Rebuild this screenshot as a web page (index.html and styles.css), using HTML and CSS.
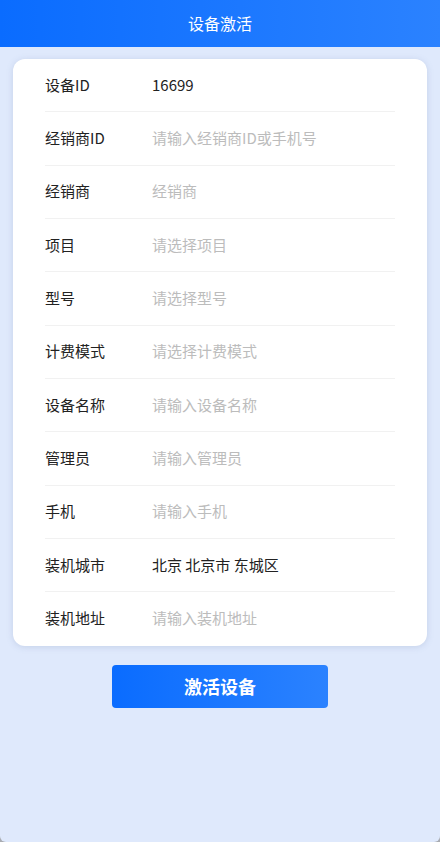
FILE: index.html
```html
<html>
<head>
    <meta http-equiv="Content-Type" content="text/html; charset=UTF-8" />
    <title>设备激活</title>
    <link rel="stylesheet" href="styles.css">
</head>
<body>
<div class="page">

    <div class="header">设备激活</div>

    <div class="card">
        <div class="row"><span class="label">设备ID</span><span class="value">16699</span></div>
        <div class="row"><span class="label">经销商ID</span><span class="value empty">请输入经销商ID或手机号</span></div>
        <div class="row"><span class="label">经销商</span><span class="value empty">经销商</span></div>
        <div class="row"><span class="label">项目</span><span class="value empty">请选择项目</span></div>
        <div class="row"><span class="label">型号</span><span class="value empty">请选择型号</span></div>
        <div class="row"><span class="label">计费模式</span><span class="value empty">请选择计费模式</span></div>
        <div class="row"><span class="label">设备名称</span><span class="value empty">请输入设备名称</span></div>
        <div class="row"><span class="label">管理员</span><span class="value empty">请输入管理员</span></div>
        <div class="row"><span class="label">手机</span><span class="value empty">请输入手机</span></div>
        <div class="row"><span class="label">装机城市</span><span class="value">北京 北京市 东城区</span></div>
        <div class="row"><span class="label">装机地址</span><span class="value empty">请输入装机地址</span></div>
    </div>

    <div class="actions">
        <button class="btn">激活设备</button>
    </div>

</div>
</body>
</html>
```

FILE: styles.css
```css
html, body {
    margin: 0;
    padding: 0;
    background: #a9acb2;
}

body {
    font-size: 15px;
    font-family: "Noto Sans CJK SC", "Noto Sans", sans-serif;
    color: #333;
}

.page {
    height: 842px;
    background: #dfe9fc;
    border-radius: 0 0 6px 6px;
    overflow: hidden;
}

.header {
    height: 47px;
    line-height: 46px;
    text-align: center;
    color: #fff;
    font-size: 16px;
    background: linear-gradient(90deg, #0a6cff, #2b82ff);
}

.card {
    margin: 12px 13px 0;
    padding: 0 32px;
    background: #fff;
    border-radius: 12px;
    box-shadow: 0 1px 6px rgba(120, 140, 180, 0.25);
}

.row {
    display: flex;
    align-items: center;
    height: 53.33px;
    padding-bottom: 2px;
    box-sizing: border-box;
    border-bottom: 1px solid #f1f1f1;
}

.row:last-child {
    border-bottom: none;
}

.label {
    width: 107px;
    color: #222;
}

.value {
    color: #222;
}

.value.empty {
    color: #bcbcbc;
}

.actions {
    display: flex;
    justify-content: center;
    padding-top: 19px;
}

.btn {
    width: 216px;
    height: 43px;
    border: none;
    border-radius: 4px;
    color: #fff;
    font-size: 18px;
    font-weight: bold;
    font-family: "Noto Sans CJK SC", sans-serif;
    background: linear-gradient(90deg, #0a6cff, #2b82ff);
}
```
